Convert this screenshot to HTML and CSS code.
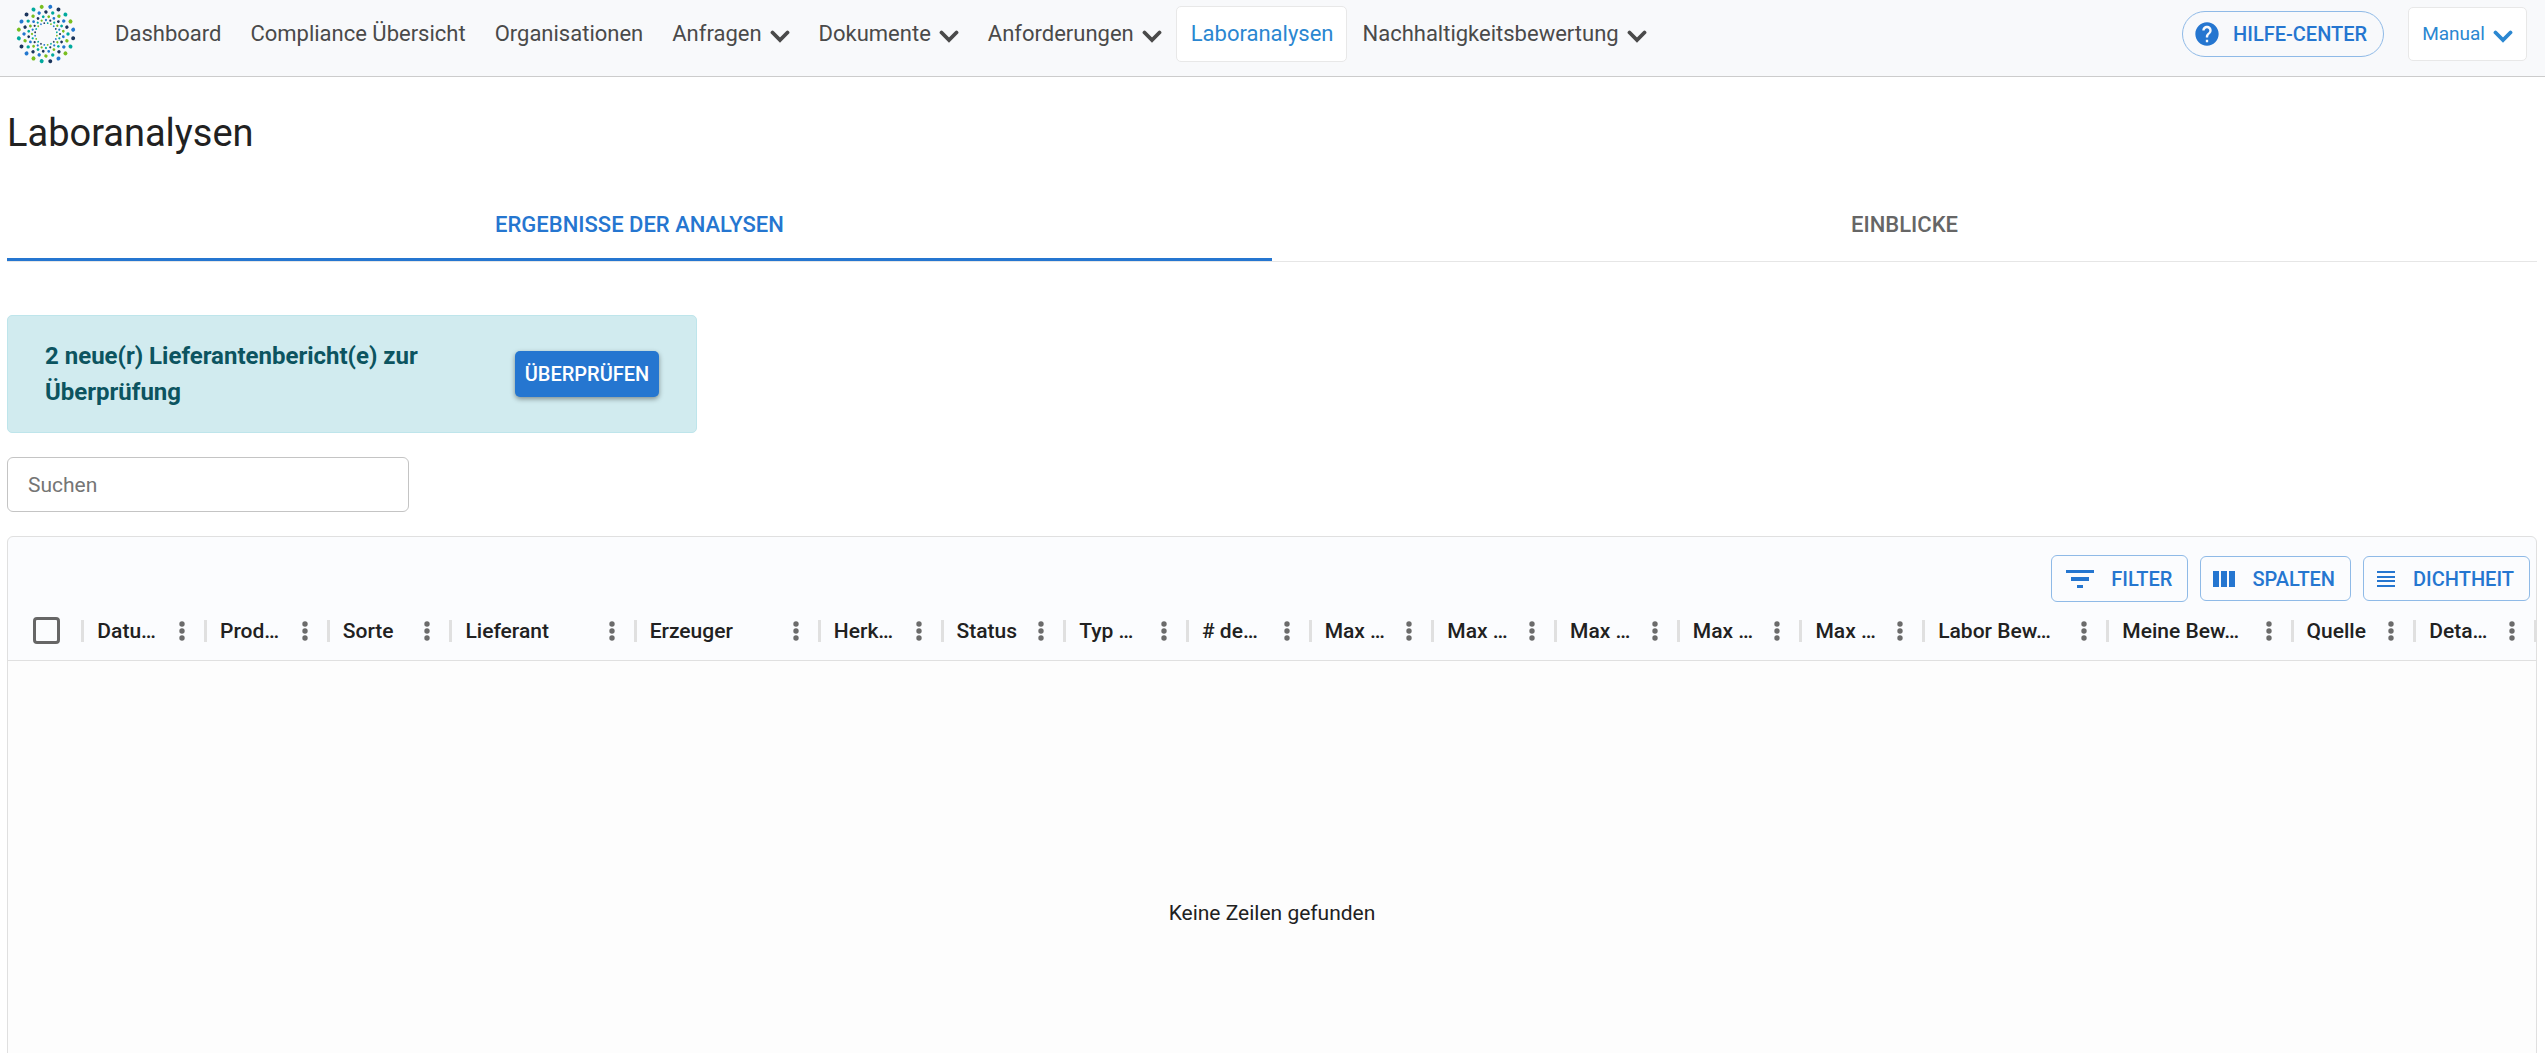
FILE: index.html
```html
<!DOCTYPE html>
<html lang="de">
<head>
    <meta charset="UTF-8">
    <meta name="viewport" content="width=device-width, initial-scale=1.0">
    <title>Laboranalysen</title>
    <link rel="stylesheet" href="styles.css">
</head>
<body>
    <!-- shared icons -->
    <svg class="sprite" aria-hidden="true">
        <symbol id="chevron" viewBox="0 0 20 13">
            <path d="M2.5 2.5 L10 10 L17.5 2.5" fill="none" stroke="currentColor" stroke-width="3.8" stroke-linecap="round"/>
        </symbol>
        <symbol id="dots" viewBox="0 0 6 20">
            <circle cx="3" cy="3" r="2.7"/>
            <circle cx="3" cy="10" r="2.7"/>
            <circle cx="3" cy="17" r="2.7"/>
        </symbol>
    </svg>

    <header class="topbar">
        <a href="#" class="logo" aria-label="Startseite">
            <!-- every ring has 20 dots, 5 of each color -->
            <svg width="60" height="60" viewBox="-30 -30 60 60">
                <g class="ring" stroke-width="4">
                    <circle class="navy" r="27.5" pathLength="5" transform="rotate(9)"/>
                    <circle class="teal" r="27.5" pathLength="5" transform="rotate(27)"/>
                    <circle class="green" r="27.5" pathLength="5" transform="rotate(45)"/>
                    <circle class="blue" r="27.5" pathLength="5" transform="rotate(63)"/>
                </g>
                <g class="ring" stroke-width="3.4">
                    <circle class="teal" r="22" pathLength="5" transform="rotate(0)"/>
                    <circle class="green" r="22" pathLength="5" transform="rotate(18)"/>
                    <circle class="blue" r="22" pathLength="5" transform="rotate(36)"/>
                    <circle class="navy" r="22" pathLength="5" transform="rotate(54)"/>
                </g>
                <g class="ring" stroke-width="2.8">
                    <circle class="blue" r="17.5" pathLength="5" transform="rotate(9)"/>
                    <circle class="navy" r="17.5" pathLength="5" transform="rotate(27)"/>
                    <circle class="teal" r="17.5" pathLength="5" transform="rotate(45)"/>
                    <circle class="green" r="17.5" pathLength="5" transform="rotate(63)"/>
                </g>
                <g class="ring" stroke-width="2.2">
                    <circle class="navy" r="14" pathLength="5" transform="rotate(0)"/>
                    <circle class="teal" r="14" pathLength="5" transform="rotate(18)"/>
                    <circle class="green" r="14" pathLength="5" transform="rotate(36)"/>
                    <circle class="blue" r="14" pathLength="5" transform="rotate(54)"/>
                </g>
                <g class="ring" stroke-width="1.8">
                    <circle class="green" r="11" pathLength="5" transform="rotate(9)"/>
                    <circle class="blue" r="11" pathLength="5" transform="rotate(27)"/>
                    <circle class="navy" r="11" pathLength="5" transform="rotate(45)"/>
                    <circle class="teal" r="11" pathLength="5" transform="rotate(63)"/>
                </g>
            </svg>
        </a>
        <nav class="menu">
            <a href="#">Dashboard</a>
            <a href="#">Compliance Übersicht</a>
            <a href="#">Organisationen</a>
            <a href="#">Anfragen <svg class="chevron"><use href="#chevron"/></svg></a>
            <a href="#">Dokumente <svg class="chevron"><use href="#chevron"/></svg></a>
            <a href="#">Anforderungen <svg class="chevron"><use href="#chevron"/></svg></a>
            <a href="#" class="active">Laboranalysen</a>
            <a href="#">Nachhaltigkeitsbewertung <svg class="chevron"><use href="#chevron"/></svg></a>
        </nav>
        <button class="help">
            <svg width="28" height="28" viewBox="0 0 24 24" fill="currentColor"><path d="M12 2C6.48 2 2 6.48 2 12s4.48 10 10 10 10-4.48 10-10S17.52 2 12 2zm1 17h-2v-2h2v2zm2.07-7.75l-.9.92C13.45 12.9 13 13.5 13 15h-2v-.5c0-1.1.45-2.1 1.17-2.83l1.24-1.26c.37-.36.59-.86.59-1.41 0-1.1-.9-2-2-2s-2 .9-2 2H8c0-2.21 1.79-4 4-4s4 1.79 4 4c0 .88-.36 1.68-.93 2.25z"/></svg>
            HILFE-CENTER
        </button>
        <button class="user">Manual <svg class="chevron"><use href="#chevron"/></svg></button>
    </header>

    <main>
        <h1>Laboranalysen</h1>

        <div class="tabs" role="tablist">
            <button class="tab selected" role="tab" aria-selected="true">ERGEBNISSE DER ANALYSEN</button>
            <button class="tab" role="tab" aria-selected="false">EINBLICKE</button>
        </div>

        <div class="alert">
            <p>2 neue(r) Lieferantenbericht(e) zur Überprüfung</p>
            <button>ÜBERPRÜFEN</button>
        </div>

        <input type="text" class="search" placeholder="Suchen" aria-label="Suchen">

        <div class="grid">
            <div class="toolbar">
                <button class="big">
                    <svg width="28" height="28" viewBox="0 0 28 28" fill="currentColor"><path d="M0 5h28v3H0zM5 12h18v4H5zM11 20h6v3h-6z"/></svg>
                    FILTER
                </button>
                <button>
                    <svg width="22" height="22" viewBox="0 0 22 22" fill="currentColor"><path d="M0 3h6v16H0zM8 3h6v16H8zM16 3h6v16h-6z"/></svg>
                    SPALTEN
                </button>
                <button>
                    <svg width="20" height="22" viewBox="0 0 20 22" fill="currentColor"><path d="M1 3h18v2H1zM1 8h18v2H1zM1 12h18v2H1zM1 17h18v2H1z"/></svg>
                    DICHTHEIT
                </button>
            </div>
            <table>
                <thead>
                    <tr>
                        <th class="check"><input type="checkbox" aria-label="Alle Zeilen auswählen"></th>
                        <th><div class="cell">Datu…<svg><use href="#dots"/></svg></div></th>
                        <th><div class="cell">Prod…<svg><use href="#dots"/></svg></div></th>
                        <th><div class="cell">Sorte<svg><use href="#dots"/></svg></div></th>
                        <th class="wide"><div class="cell">Lieferant<svg><use href="#dots"/></svg></div></th>
                        <th class="wide"><div class="cell">Erzeuger<svg><use href="#dots"/></svg></div></th>
                        <th><div class="cell">Herk…<svg><use href="#dots"/></svg></div></th>
                        <th><div class="cell">Status<svg><use href="#dots"/></svg></div></th>
                        <th><div class="cell">Typ …<svg><use href="#dots"/></svg></div></th>
                        <th><div class="cell"># de…<svg><use href="#dots"/></svg></div></th>
                        <th><div class="cell">Max …<svg><use href="#dots"/></svg></div></th>
                        <th><div class="cell">Max …<svg><use href="#dots"/></svg></div></th>
                        <th><div class="cell">Max …<svg><use href="#dots"/></svg></div></th>
                        <th><div class="cell">Max …<svg><use href="#dots"/></svg></div></th>
                        <th><div class="cell">Max …<svg><use href="#dots"/></svg></div></th>
                        <th class="wide"><div class="cell">Labor Bew…<svg><use href="#dots"/></svg></div></th>
                        <th class="wide"><div class="cell">Meine Bew…<svg><use href="#dots"/></svg></div></th>
                        <th><div class="cell">Quelle<svg><use href="#dots"/></svg></div></th>
                        <th><div class="cell last">Deta…<svg><use href="#dots"/></svg></div></th>
                    </tr>
                </thead>
                <tbody>
                    <tr>
                        <td colspan="19">Keine Zeilen gefunden</td>
                    </tr>
                </tbody>
            </table>
        </div>
    </main>
</body>
</html>
```
FILE: styles.css
```css
* {
    box-sizing: border-box;
}
body {
    margin: 0;
    height: 100vh;
    overflow: hidden;
    background: white;
    color: #212121;
    font: 21px/32px Roboto, "Liberation Sans", sans-serif;
}
button, input {
    font: inherit;
}
button {
    display: flex;
    align-items: center;
    cursor: pointer;
}
.sprite {
    display: none;
}

/* top bar */
.topbar {
    display: flex;
    align-items: center;
    height: 77px;
    padding: 0 18px 8px 16px;
    background: #f8f9fb;
    border-bottom: 1px solid #cccccc;
}
.logo {
    display: flex;
    margin-right: 24px;
}
.ring circle {
    fill: none;
    stroke-linecap: round;
    stroke-dasharray: 0 1;
}
.navy {
    stroke: #1b365d;
}
.teal {
    stroke: #00a99d;
}
.green {
    stroke: #78be20;
}
.blue {
    stroke: #2277cf;
}
.menu {
    display: flex;
    flex: 1;
}
.menu a {
    display: flex;
    align-items: center;
    height: 56px;
    padding: 0 13px 0 14px;
    border: 1px solid transparent;
    border-radius: 5px;
    color: #4a4a4a;
    font-size: 22px;
    text-decoration: none;
}
.menu .active {
    background: white;
    border-color: #e8e8e8;
    color: #2b87d1;
}
.chevron {
    width: 20px;
    height: 13px;
    margin-left: 8px;
    margin-top: 4px;
}
.help {
    gap: 12px;
    height: 46px;
    padding: 0 16px 0 10px;
    margin-right: 24px;
    border: 1px solid #8fbae7;
    border-radius: 23px;
    background: none;
    color: #2576d0;
    font-size: 20px;
    font-weight: 500;
}
.user {
    height: 54px;
    padding: 0 13px;
    border: 1px solid #e8e8e8;
    border-radius: 5px;
    background: white;
    color: #2b87d1;
    font-size: 19px;
}

main {
    padding: 0 8px 0 7px;
}
h1 {
    margin: 32px 0;
    font-size: 38px;
    line-height: 48px;
    font-weight: 400;
}

/* tabs */
.tabs {
    display: flex;
    border-bottom: 1px solid #e6e6e6;
}
.tab {
    flex: 1;
    justify-content: center;
    height: 72px;
    padding: 2px 0 0;
    border: 0;
    border-bottom: 3px solid transparent;
    background: none;
    color: #666666;
    font-size: 22px;
    font-weight: 500;
}
.selected {
    border-color: #2576d0;
    color: #2576d0;
}

.alert {
    display: flex;
    align-items: center;
    justify-content: space-between;
    width: 690px;
    margin-top: 53px;
    padding: 22px 37px;
    border: 1px solid #bee5eb;
    border-radius: 5px;
    background: #d1ebef;
    color: #0c5460;
}
.alert p {
    width: 400px;
    margin: 0;
    font-size: 24px;
    line-height: 36px;
    font-weight: 700;
}
.alert button {
    justify-content: center;
    width: 144px;
    height: 46px;
    padding: 0;
    border: 0;
    border-radius: 5px;
    background: #2576d0;
    box-shadow: 0 2px 5px rgba(0, 0, 0, 0.4);
    color: white;
    font-size: 20px;
    font-weight: 500;
}
.search {
    display: block;
    width: 402px;
    height: 55px;
    margin: 24px 0;
    padding: 0 20px;
    border: 1px solid #c4c4c4;
    border-radius: 6px;
}
.search::placeholder {
    color: #757575;
}

/* data grid */
.grid {
    border: 1px solid #e0e0e0;
    border-radius: 6px;
    background: #fbfcfe;
}
.toolbar {
    display: flex;
    align-items: center;
    justify-content: flex-end;
    gap: 12px;
    padding: 18px 6px 0;
}
.toolbar button {
    gap: 17px;
    height: 45px;
    padding: 0 15px 0 12px;
    border: 1px solid #8fbae7;
    border-radius: 6px;
    background: none;
    color: #2576d0;
    font-size: 20px;
    font-weight: 500;
}
.toolbar .big {
    height: 47px;
    padding-left: 14px;
}
table {
    width: 100%;
    table-layout: fixed;
    border-collapse: collapse;
}
th {
    width: 4.85%;
    height: 58px;
    padding: 0;
    border-bottom: 1px solid #e0e0e0;
    font-size: 21px;
    font-weight: 500;
    text-align: left;
}
th.wide {
    width: 7.28%;
}
th.check {
    width: 2.9%;
}
.cell {
    display: flex;
    align-items: center;
    justify-content: space-between;
    height: 22px;
    padding: 0 19px 0 13px;
    border-left: 3px solid #e0e0e0;
    white-space: nowrap;
}
.cell.last {
    border-right: 2px solid #e0e0e0;
}
.cell svg {
    width: 6px;
    height: 20px;
    fill: #6b6b6b;
}
.check input {
    appearance: none;
    display: block;
    width: 27px;
    height: 27px;
    margin: 0 0 0 25px;
    border: 3px solid #666666;
    border-radius: 4px;
}
td {
    height: 506px;
    padding: 0;
    background: #fdfdfd;
    text-align: center;
}
```
